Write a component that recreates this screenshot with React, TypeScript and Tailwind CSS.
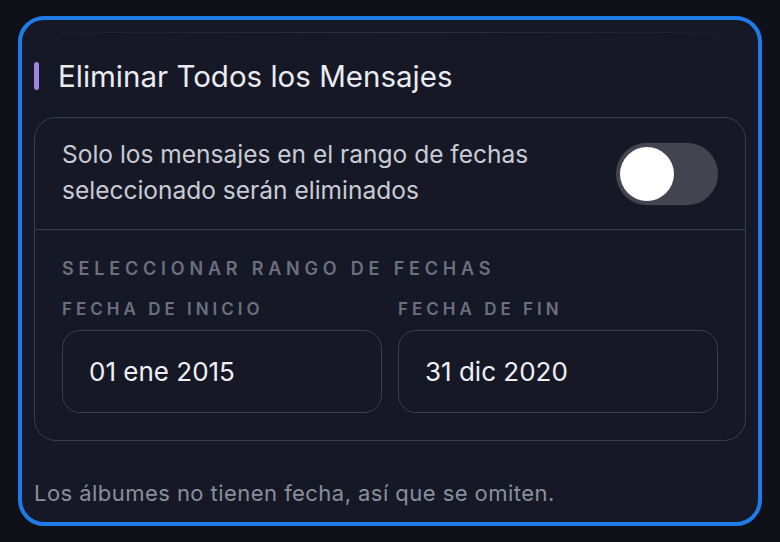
export default function App() {
  return (
    <div className="w-[780px] h-[542px] bg-[#0f1119] pt-[16px] px-[18px] font-['Inter','Noto_Sans',sans-serif]">
      <div className="w-[744px] h-[510px] rounded-[26px] border-4 border-[#1f7be8] bg-[#161925] px-[12px] overflow-hidden">
        <div className="mt-[12px] mx-[26px] h-px bg-gradient-to-r from-[#1b1e29] via-[#2f3240] to-[#1b1e29]" />

        <div className="mt-[25px] flex items-center h-[36px]">
          <div className="w-[5px] h-[28px] rounded-full bg-[#9d85e0]" />
          <h2 className="ml-[19px] text-[29.5px] leading-[36px] text-[#eaecf3]">Eliminar Todos los Mensajes</h2>
        </div>

        <div className="mt-[23px] rounded-[22px] border border-[#3a3d4b]">
          <div className="h-[111px] flex items-center justify-between px-[27px]">
            <p className="mb-[4px] text-[24.5px] leading-[36px] text-[#c8cbd6]">
              Solo los mensajes en el rango de fechas
              <br />
              seleccionado serán eliminados
            </p>
            <div className="w-[102px] h-[62px] rounded-full bg-[#42444f] p-[4px] shadow-[0_0_0_1px_#1c1e28]">
              <div className="w-[54px] h-[54px] rounded-full bg-white" />
            </div>
          </div>

          <div className="border-t border-[#3a3d4b] px-[27px] pt-[27px] pb-[27px]">
            <p className="text-[18px] leading-[24px] font-semibold tracking-[4.8px] text-[#6c6f80] whitespace-nowrap">
              SELECCIONAR RANGO DE FECHAS
            </p>
            <div className="mt-[16px] grid grid-cols-2 gap-[16px]">
              <div>
                <p className="text-[17px] leading-[24px] font-semibold tracking-[4px] text-[#6c6f80]">FECHA DE INICIO</p>
                <div className="mt-[9px] h-[83px] rounded-[18px] border border-[#3b3e4b] flex items-center px-[26px] text-[26px] text-[#eef0f5]">
                  01 ene 2015
                </div>
              </div>
              <div>
                <p className="text-[17px] leading-[24px] font-semibold tracking-[4px] text-[#6c6f80]">FECHA DE FIN</p>
                <div className="mt-[9px] h-[83px] rounded-[18px] border border-[#3b3e4b] flex items-center px-[26px] text-[26px] text-[#eef0f5]">
                  31 dic 2020
                </div>
              </div>
            </div>
          </div>
        </div>

        <p className="mt-[38px] text-[22px] leading-[28px] tracking-[0.45px] text-[#8b8e9c] whitespace-nowrap">
          Los álbumes no tienen fecha, así que se omiten.
        </p>
      </div>
    </div>
  );
}
